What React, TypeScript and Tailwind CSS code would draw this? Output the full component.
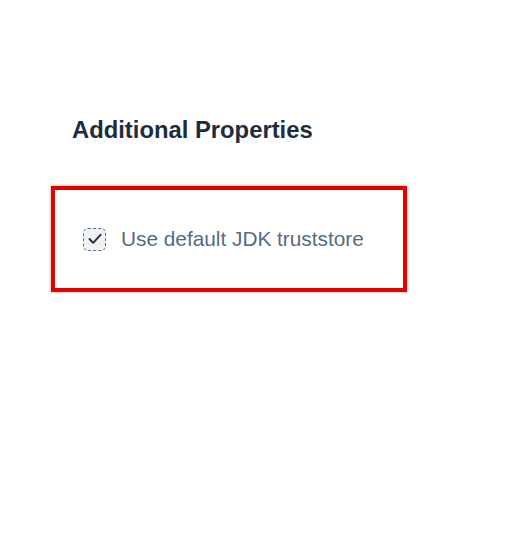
export default function App() {
  return (
    <div className="min-h-[544px] bg-white pl-[51px] pt-[114px] font-['Liberation_Sans',Arial,sans-serif]">
      <h2 className="pl-[21px] text-[23.8px] font-bold leading-[32px] text-[#1d2d3e]">
        Additional Properties
      </h2>
      <div className="mt-[40px] flex h-[106px] w-[356px] items-center border-4 border-[#e30000] bg-white pl-[28px] shadow-[0_0_2px_1px_rgba(0,0,0,0.2)]">
        <label className="flex items-center gap-[15px]">
          <span className="flex h-[23px] w-[23px] items-center justify-center rounded-[5px] border border-dashed border-[#5b738b] bg-[#eff1f3]">
            <svg width="14" height="12" viewBox="0 0 14 12" fill="none">
              <path d="M1.5 6 L5.2 9.8 L12.5 1.8" stroke="#1d2d3e" strokeWidth="1.9" strokeLinecap="round" strokeLinejoin="round" />
            </svg>
          </span>
          <span className="text-[20.8px] leading-[26px] text-[#556b82]">Use default JDK truststore</span>
        </label>
      </div>
    </div>
  );
}
